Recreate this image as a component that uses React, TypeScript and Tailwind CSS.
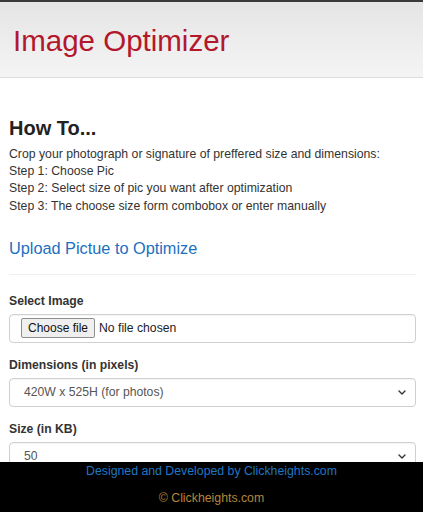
import React from "react";

const font = { fontFamily: '"Liberation Sans", Arial, Helvetica, sans-serif' };

function Chevron() {
  return (
    <svg width="8" height="5" viewBox="0 0 8 5" className="shrink-0">
      <path d="M1 1 L4 4 L7 1" fill="none" stroke="#333" strokeWidth="1.4" strokeLinecap="round" strokeLinejoin="round" />
    </svg>
  );
}

function SelectBox({ value }: { value: string }) {
  return (
    <div className="flex h-[29px] items-center justify-between rounded-[4px] border border-[#d0d0d0] bg-white pl-[14px] pr-[9px] shadow-[inset_0_1px_1px_rgba(0,0,0,0.05)]">
      <span className="text-[12.2px] leading-[16px] text-[#555]">{value}</span>
      <Chevron />
    </div>
  );
}

export default function App() {
  return (
    <div style={font} className="min-h-[512px] bg-white text-[#333]">
      <div className="h-[2px] bg-[#3a3a3a]" />
      <header className="border-b border-[#dcdcdc] bg-gradient-to-b from-[#e5e5e5] to-[#f4f4f4] pl-[13px] pt-[22px] pb-[19px]">
        <h1 className="text-[29.5px] leading-[34px] font-normal text-[#b3172b]">Image Optimizer</h1>
      </header>
      <main className="pl-[9px] pr-[7px] pt-[38px]">
        <h3 className="text-[20px] leading-[24px] font-bold text-[#222]">How To...</h3>
        <div className="mt-[5.5px] text-[12.25px] leading-[17.4px] text-[#333]">
          <p>Crop your photograph or signature of preffered size and dimensions:</p>
          <p>Step 1: Choose Pic</p>
          <p>Step 2: Select size of pic you want after optimization</p>
          <p>Step 3: The choose size form combobox or enter manually</p>
        </div>
        <h4 className="mt-[23px] text-[16.3px] leading-[20px] font-normal text-[#1a70bf]">Upload Pictue to Optimize</h4>
        <hr className="mt-[15.5px] border-0 border-t border-[#eeeeee]" />
        <div className="mt-[18.8px]">
          <label className="block text-[12.2px] leading-[16px] font-bold text-[#333]">Select Image</label>
          <div className="mt-[4.2px] flex h-[29px] items-center gap-[4px] rounded-[4px] border border-[#d0d0d0] bg-white pl-[11px] shadow-[inset_0_1px_1px_rgba(0,0,0,0.05)]">
            <span className="flex h-[20px] items-center rounded-[2px] border border-[#8f8f8f] bg-[#efefef] px-[6px] text-[12px] leading-[14px] text-[#111]">Choose file</span>
            <span className="text-[12.2px] leading-[16px] text-[#222]">No file chosen</span>
          </div>
        </div>
        <div className="mt-[14.8px]">
          <label className="block text-[12.2px] leading-[16px] font-bold text-[#333]">Dimensions (in pixels)</label>
          <div className="mt-[4.2px]">
            <SelectBox value="420W x 525H (for photos)" />
          </div>
        </div>
        <div className="mt-[14.8px]">
          <label className="block text-[12.2px] leading-[16px] font-bold text-[#333]">Size (in KB)</label>
          <div className="mt-[4.2px]">
            <SelectBox value="50" />
          </div>
        </div>
      </main>
      <footer className="fixed bottom-0 left-0 right-0 h-[50px] bg-black pt-[1px] text-center text-[12.3px] leading-[16px]">
        <p className="text-[#1f77c2]">Designed and Developed by Clickheights.com</p>
        <p className="mt-[10.5px] text-[#b3873a]">© Clickheights.com</p>
      </footer>
    </div>
  );
}
